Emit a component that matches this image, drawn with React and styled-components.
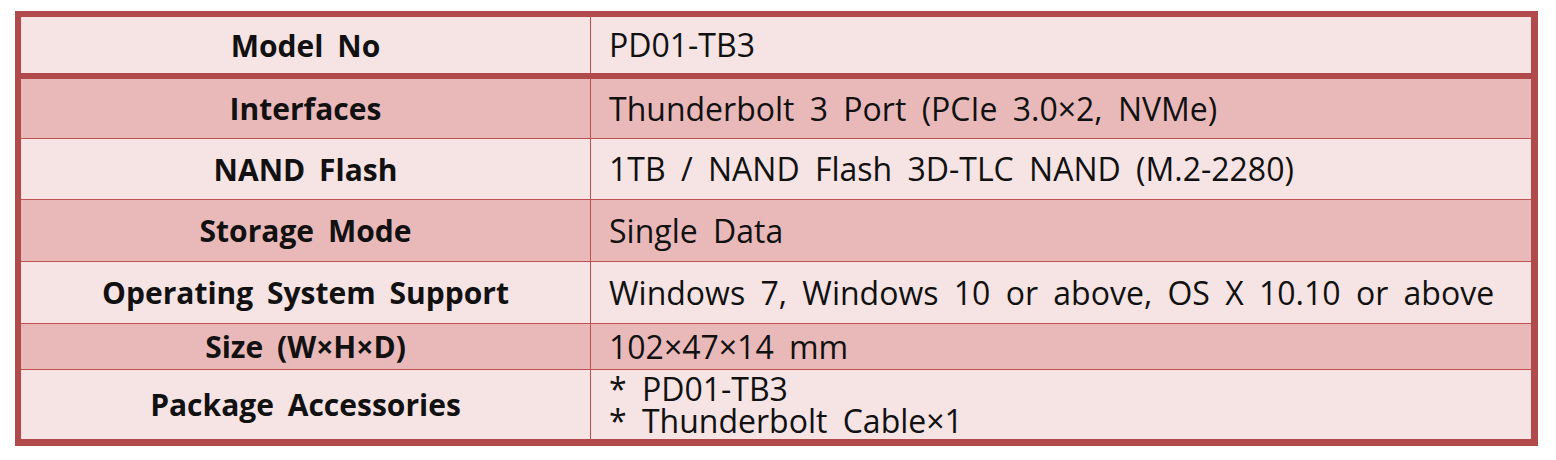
import React from "react";
import styled, { createGlobalStyle } from "styled-components";

const GlobalStyle = createGlobalStyle`
  body {
    margin: 0;
    background: #fff;
    font-family: "Open Sans", "Noto Sans CJK KR", sans-serif;
    color: #111;
  }
`;

const Page = styled.div`
  padding: 11px 0 0 15px;
`;

const SpecTable = styled.div`
  width: 1510px;
  border: 6px solid #b14a4b;
  border-right-width: 7px;
  border-bottom-width: 7px;
  display: flex;
  flex-direction: column;
`;

const Row = styled.div`
  display: grid;
  grid-template-columns: 570px 1fr;
  height: ${(props) => props.height}px;
  background: ${(props) => (props.dark ? "#e9b9b9" : "#f6e3e3")};
  border-top: ${(props) =>
    props.thick ? "6px solid #b14a4b" : props.first ? "none" : "1px solid #c0504f"};
`;

const Label = styled.div`
  display: flex;
  align-items: center;
  justify-content: center;
  border-right: 1px solid #c0504f;
  font-weight: 700;
  font-size: 30px;
  word-spacing: 6px;
`;

const Value = styled.div`
  display: flex;
  flex-direction: column;
  justify-content: center;
  padding-left: 18px;
  font-size: 32px;
  word-spacing: 7px;
  line-height: 32px;
`;

const specs = [
  { label: "Model No", value: ["PD01-TB3"], height: 56, first: true },
  {
    label: "Interfaces",
    value: ["Thunderbolt 3 Port (PCIe 3.0×2, NVMe)"],
    height: 59,
    dark: true,
    thick: true,
  },
  {
    label: "NAND Flash",
    value: ["1TB / NAND Flash 3D-TLC NAND (M.2-2280)"],
    height: 60,
  },
  { label: "Storage Mode", value: ["Single Data"], height: 61, dark: true },
  {
    label: "Operating System Support",
    value: ["Windows 7, Windows 10 or above, OS X 10.10 or above"],
    height: 61,
  },
  { label: "Size (W×H×D)", value: ["102×47×14 mm"], height: 45, dark: true },
  {
    label: "Package Accessories",
    value: ["* PD01-TB3", "* Thunderbolt Cable×1"],
    height: 69,
  },
];

const App = () => {
  return (
    <Page>
      <GlobalStyle />
      <SpecTable>
        {specs.map((itm) => (
          <Row
            key={itm.label}
            height={itm.height}
            dark={itm.dark}
            thick={itm.thick}
            first={itm.first}
          >
            <Label>{itm.label}</Label>
            <Value>
              {itm.value.map((line) => (
                <span key={line}>{line}</span>
              ))}
            </Value>
          </Row>
        ))}
      </SpecTable>
    </Page>
  );
};

export default App;
